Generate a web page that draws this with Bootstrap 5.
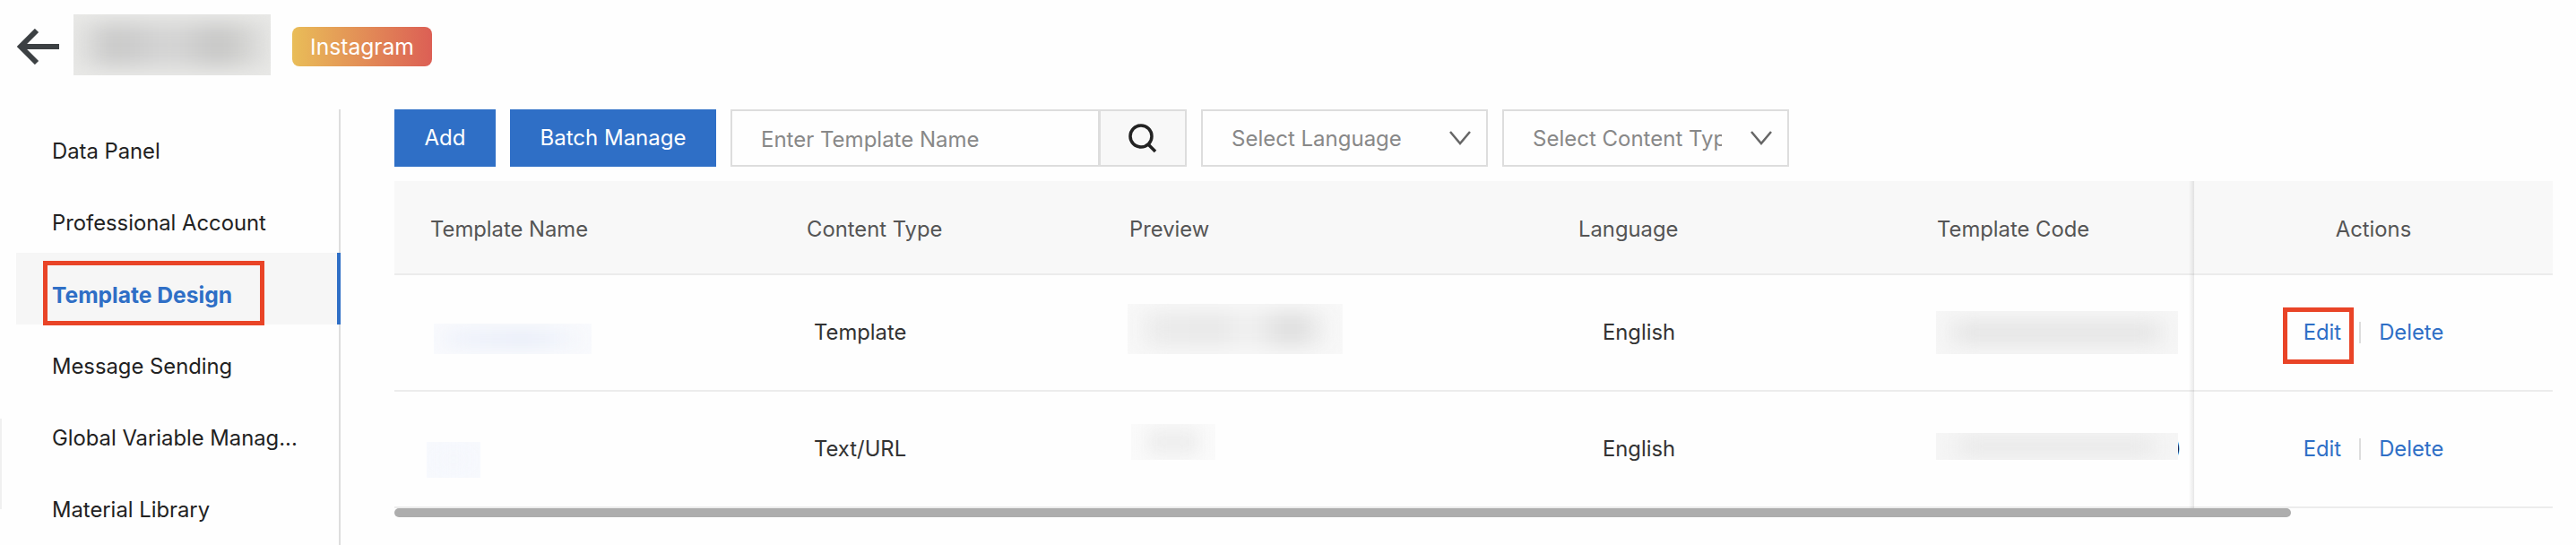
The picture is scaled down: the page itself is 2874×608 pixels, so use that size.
<!DOCTYPE html>
<html lang="en">
<head>
    <meta charset="UTF-8">
    <meta name="viewport" content="width=device-width, initial-scale=1.0">
    <title>Template Design</title>
    <link rel="stylesheet" href="https://cdn.jsdelivr.net/npm/bootstrap@5.3.0/dist/css/bootstrap.min.css">
    <style>
        html, body {
            height: 608px;
            overflow: hidden;
        }
        body {
            background: #fefefe;
            font-family: "Inter", "Liberation Sans", sans-serif;
            font-size: 23.8px;
            color: #222;
        }
        .page-head {
            height: 122px;
            padding: 16px 0 38px 19px;
        }
        .back-arrow {
            width: 48px;
            height: 40px;
            margin-right: 15px;
        }
        .smudge {
            position: relative;
            z-index: 1;
            overflow: hidden;
            flex-shrink: 0;
        }
        .smudge > span {
            display: block;
            width: 100%;
            height: 100%;
            filter: blur(14px);
        }
        .smudge-title {
            width: 220px;
            height: 68px;
            background: #e9e9e7;
        }
        .smudge-title > span {
            background: linear-gradient(90deg, #e4e4e2 0, #c8c8c8 18%, #d6d6d6 50%, #c6c6c5 76%, #e0e0de 100%);
            transform: scale(.96, .7);
        }
        .channel-tag {
            width: 156px;
            height: 44px;
            margin: 14px 0 0 24px;
            border-radius: 8px;
            background: linear-gradient(90deg, #e9bd58, #dc5f55);
            color: #fff;
            font-size: 24.6px;
        }
        .side-menu {
            width: 362px;
            margin-left: 18px;
            border-right: 2px solid #ddd;
            height: 486px;
            flex-shrink: 0;
        }
        .menu-row {
            position: relative;
            height: 80px;
            padding: 14px 0 0 40px;
            margin-right: -2px;
            white-space: nowrap;
        }
        .menu-row.is-current {
            background: #f6f6f6;
            border-right: 4px solid #2f6fc6;
            color: #2f6fc6;
            font-weight: 700;
            font-size: 24.6px;
        }
        .red-box {
            position: absolute;
            border: 5px solid #e94427;
            pointer-events: none;
        }
        .red-menu {
            left: 30px;
            top: 9px;
            width: 247px;
            height: 72px;
        }
        .red-edit {
            left: 99px;
            top: 36px;
            width: 79px;
            height: 63px;
        }
        .page-edge {
            position: absolute;
            left: 0;
            top: 467px;
            width: 2px;
            height: 101px;
            background: #f0f0f0;
        }
        .main-area {
            margin-left: 60px;
            width: 2408px;
        }
        .tool-row {
            height: 64px;
            margin-bottom: 16px;
        }
        .tool-btn {
            background: #2f6fc6;
            border: 0;
            border-radius: 0;
            color: #fff;
            font-size: 24px;
            height: 64px;
        }
        .tool-add { width: 113px; }
        .tool-batch { width: 230px; margin-left: 16px; }
        .search-wrap {
            width: 509px;
            height: 64px;
            margin-left: 16px;
            flex-wrap: nowrap;
        }
        .tool-input {
            border: 2px solid #ddd;
            border-radius: 0;
            font-size: 24px;
            padding: 2px 0 0 32px;
            height: 64px;
            background: #fefefe;
        }
        .tool-input::placeholder, .pick-box input::placeholder {
            color: #888;
        }
        .search-btn {
            width: 98px;
            border: 2px solid #ddd;
            border-radius: 0;
            background: #f8f8f8;
        }
        .pick-box {
            width: 320px;
            height: 64px;
            margin-left: 16px;
            border: 2px solid #ddd;
            padding: 2px 17px 0 32px;
        }
        .pick-box input {
            border: 0;
            outline: 0;
            background: transparent;
            font-size: 24px;
            width: 211px;
            min-width: 0;
            padding: 0;
        }
        .pick-box svg {
            width: 24px;
            height: 16px;
            margin: -2px 0 0 auto;
        }
        .tpl-table {
            table-layout: fixed;
            width: 2408px;
            margin: 0;
            font-size: 23.8px;
            --bs-table-bg: transparent;
        }
        .tpl-table th {
            height: 104px;
            background: #f8f8f8;
            color: #555;
            font-weight: 400;
            padding: 5px 0 0 40px;
            vertical-align: middle;
            border-bottom: 2px solid #ececec;
        }
        .tpl-table td {
            height: 130px;
            padding: 0 0 1px 40px;
            vertical-align: middle;
            border-bottom: 2px solid #ececec;
            color: #333;
        }
        .col-name { width: 420px; }
        .col-type { width: 360px; }
        .col-preview { width: 501px; }
        .col-lang { width: 400px; }
        .col-code { width: 327px; }
        .col-actions { width: 400px; }
        .tpl-table th.cell-actions, .tpl-table td.cell-actions {
            position: relative;
            padding-left: 0;
            text-align: center;
        }
        .cell-actions::before {
            content: "";
            position: absolute;
            left: -6px;
            top: 0;
            bottom: -2px;
            width: 6px;
            background: linear-gradient(90deg, rgba(0, 0, 0, 0), rgba(0, 0, 0, .09));
        }
        .tpl-table td.shift-type { padding-left: 48px; }
        .tpl-table td.shift-lang { padding-left: 67px; }
        .act-link {
            color: #2f6fc6;
            text-decoration: none;
        }
        .act-split {
            display: inline-block;
            width: 2px;
            height: 24px;
            background: #ddd;
            margin: 0 20px;
            vertical-align: -4px;
        }
        .smudge-name1 { width: 176px; height: 34px; margin: 15px 0 0 4px; background: #f9fafd; }
        .smudge-name1 > span { background: linear-gradient(90deg, #f0f3fb, #e8edf8 60%, #f5f7fc); transform: scale(.85, .6); }
        .smudge-name2 { width: 60px; height: 40px; margin: 24px 0 0 -4px; background: #f8fafe; }
        .smudge-name2 > span { background: #f5f7fc; }
        .smudge-prev1 { width: 240px; height: 56px; margin: -7px 0 0 -2px; background: #f8f8f8; }
        .smudge-prev1 > span { background: linear-gradient(90deg, #ececec, #e8e8e8 40%, #f1f1f1 58%, #dcdcdc 82%, #f2f2f2); transform: scale(.84, .7); }
        .smudge-prev2 { width: 94px; height: 40px; margin: -16px 0 0 2px; background: #fafafa; }
        .smudge-prev2 > span { background: #ededed; transform: scale(.6, .7); }
        .smudge-code1 { width: 270px; height: 48px; margin: 1px 0 0 -1px; background: #f6f6f6; }
        .smudge-code1 > span { background: #e7e7e7; transform: scale(.85, .6); }
        .smudge-code2 { width: 270px; height: 30px; margin: -6px 0 0 -1px; background: #f5f5f5; }
        .smudge-code2 > span { background: #e9e9e9; transform: scale(.8, .7); }
        .code-wrap {
            position: relative;
        }
        .code-tail {
            position: absolute;
            left: 264px;
            top: 2px;
            line-height: 30px;
            color: #222;
        }
        .fake-scroll {
            width: 2116px;
            height: 10px;
            border-radius: 5px;
            background: #adadad;
        }
    </style>
</head>
<body>
<div class="page-head d-flex align-items-start">
    <svg class="back-arrow mt-3" viewBox="0 0 48 40" fill="none" stroke="#3c4043" stroke-width="6">
        <path d="M47 20H5"/>
        <path d="M22 2 4 20 22 38"/>
    </svg>
    <div class="smudge smudge-title"><span></span></div>
    <div class="channel-tag d-flex align-items-center justify-content-center">Instagram</div>
</div>

<div class="page-edge"></div>

<div class="d-flex">
    <div class="side-menu">
        <div class="menu-row d-flex align-items-center">Data Panel</div>
        <div class="menu-row d-flex align-items-center">Professional Account</div>
        <div class="menu-row is-current d-flex align-items-center">Template Design<div class="red-box red-menu"></div></div>
        <div class="menu-row d-flex align-items-center">Message Sending</div>
        <div class="menu-row d-flex align-items-center">Global Variable Manag...</div>
        <div class="menu-row d-flex align-items-center">Material Library</div>
    </div>

    <div class="main-area">
        <div class="tool-row d-flex">
            <button class="btn tool-btn tool-add p-0" type="button">Add</button>
            <button class="btn tool-btn tool-batch p-0" type="button">Batch Manage</button>
            <div class="input-group search-wrap">
                <input type="text" class="form-control tool-input" placeholder="Enter Template Name">
                <button class="btn search-btn d-flex align-items-center justify-content-center p-0" type="button">
                    <svg width="34" height="34" viewBox="0 0 34 34" fill="none" stroke="#222" stroke-width="3.5">
                        <circle cx="15" cy="15" r="12"/>
                        <path d="M23 24 31 32"/>
                    </svg>
                </button>
            </div>
            <div class="pick-box d-flex align-items-center">
                <input type="text" placeholder="Select Language" readonly>
                <svg viewBox="0 0 24 16" fill="none" stroke="#666" stroke-width="2.5"><path d="M1 1 12 14 23 1"/></svg>
            </div>
            <div class="pick-box d-flex align-items-center">
                <input type="text" placeholder="Select Content Type" readonly>
                <svg viewBox="0 0 24 16" fill="none" stroke="#666" stroke-width="2.5"><path d="M1 1 12 14 23 1"/></svg>
            </div>
        </div>

        <table class="table tpl-table">
            <colgroup>
                <col class="col-name"><col class="col-type"><col class="col-preview"><col class="col-lang"><col class="col-code"><col class="col-actions">
            </colgroup>
            <thead>
                <tr>
                    <th>Template Name</th>
                    <th>Content Type</th>
                    <th>Preview</th>
                    <th>Language</th>
                    <th>Template Code</th>
                    <th class="cell-actions">Actions</th>
                </tr>
            </thead>
            <tbody>
                <tr>
                    <td><div class="smudge smudge-name1"><span></span></div></td>
                    <td class="shift-type">Template</td>
                    <td><div class="smudge smudge-prev1"><span></span></div></td>
                    <td class="shift-lang">English</td>
                    <td><div class="smudge smudge-code1"><span></span></div></td>
                    <td class="cell-actions">
                        <a href="#" class="act-link">Edit</a><span class="act-split"></span><a href="#" class="act-link">Delete</a>
                        <div class="red-box red-edit"></div>
                    </td>
                </tr>
                <tr>
                    <td><div class="smudge smudge-name2"><span></span></div></td>
                    <td class="shift-type">Text/URL</td>
                    <td><div class="smudge smudge-prev2"><span></span></div></td>
                    <td class="shift-lang">English</td>
                    <td>
                        <div class="code-wrap">
                            <div class="smudge smudge-code2"><span></span></div>
                            <span class="code-tail">)</span>
                        </div>
                    </td>
                    <td class="cell-actions">
                        <a href="#" class="act-link">Edit</a><span class="act-split"></span><a href="#" class="act-link">Delete</a>
                    </td>
                </tr>
            </tbody>
        </table>
        <div class="fake-scroll"></div>
    </div>
</div>

<script src="https://cdn.jsdelivr.net/npm/bootstrap@5.3.0/dist/js/bootstrap.bundle.min.js"></script>
</body>
</html>
